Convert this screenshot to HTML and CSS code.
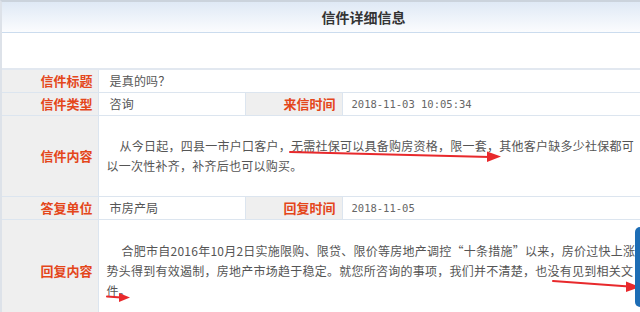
FILE: index.html
```html
<!DOCTYPE html>
<html lang="zh-CN">
<head>
    <meta charset="UTF-8">
    <meta name="viewport" content="width=device-width, initial-scale=1.0">
    <title>信件详细信息</title>
    <link rel="stylesheet" href="styles.css">
</head>
<body>

<div class="page">
    <table class="detail">
        <colgroup>
            <col class="col-label">
            <col class="col-value">
            <col class="col-label2">
            <col>
        </colgroup>
        <tr class="head">
            <th colspan="4">信件详细信息</th>
        </tr>
        <tr class="blank">
            <td colspan="4"></td>
        </tr>
        <tr class="row">
            <th class="label">信件标题</th>
            <td class="value" colspan="3">是真的吗？</td>
        </tr>
        <tr class="row">
            <th class="label">信件类型</th>
            <td class="value">咨询</td>
            <th class="label">来信时间</th>
            <td class="value date">2018-11-03 10:05:34</td>
        </tr>
        <tr class="row tall">
            <th class="label">信件内容</th>
            <td class="content" colspan="3">
                <p class="text">从今日起，四县一市户口客户，无需社保可以具备购房资格，限一套，其他客户缺多少社保都可以一次性补齐，补齐后也可以购买。</p>
            </td>
        </tr>
        <tr class="row">
            <th class="label">答复单位</th>
            <td class="value">市房产局</td>
            <th class="label">回复时间</th>
            <td class="value date">2018-11-05</td>
        </tr>
        <tr class="row tall">
            <th class="label">回复内容</th>
            <td class="content" colspan="3">
                <p class="text reply">合肥市自2016年10月2日实施限购、限贷、限价等房地产调控“十条措施”以来，房价过快上涨势头得到有效遏制，房地产市场趋于稳定。就您所咨询的事项，我们并不清楚，也没有见到相关文件。</p>
            </td>
        </tr>
    </table>

    <!-- red marks drawn on the screenshot -->
    <svg class="marks" width="640" height="312" viewBox="0 0 640 312">
        <g stroke="#e8292c" stroke-width="2" fill="none" stroke-linecap="round">
            <line x1="290" y1="152" x2="490" y2="157"/>
            <line x1="107" y1="296.5" x2="121" y2="297.5"/>
            <line x1="553" y1="281" x2="629" y2="286.5"/>
        </g>
        <g fill="#e8292c">
            <polygon points="487,151.5 501,156.5 487,162"/>
            <polygon points="119,293 130,297.5 119,302"/>
            <polygon points="626,281.5 640,287 626,292"/>
        </g>
    </svg>

    <div class="side-tab"></div>
</div>

</body>
</html>
```

FILE: styles.css
```css
html, body {
    margin: 0;
    padding: 0;
    overflow: hidden;
    background-color: #fff;
}

body {
    font-family: "Noto Sans CJK SC", "Liberation Sans", sans-serif;
    font-size: 12px;
    color: #555;
}

.page {
    position: relative;
    width: 724px;
    border-top: 2px solid #cbd3dc;
    border-left: 2px solid #dde2e9;
}

.detail {
    width: 100%;
    border-collapse: collapse;
    table-layout: fixed;
}

.col-label {
    width: 96px;
}

.col-value {
    width: 147px;
}

.col-label2 {
    width: 97px;
}

.detail th,
.detail td {
    padding: 0;
    border: 1px solid #dce5ef;
}

.detail .head th {
    height: 30px;
    border-top: none;
    border-left: none;
    border-bottom-color: #cbdcee;
    background: linear-gradient(#dfe9f5, #fbfcfe);
    font-size: 14px;
    font-weight: bold;
    color: #333;
    text-align: center;
}

.detail .blank td {
    height: 35px;
    border-left: none;
    border-bottom: 2px solid #e2e8f0;
}

.row {
    height: 23px;
}

.detail .label {
    padding-right: 5px;
    background-color: #efefef;
    color: #e4461a;
    font-size: 13px;
    font-weight: bold;
    text-align: right;
    white-space: nowrap;
}

.detail .label:first-child {
    border-left: none;
}

.detail .value + .label {
    padding-right: 6px;
}

.detail .value {
    padding-left: 11px;
    text-align: left;
    letter-spacing: 0.2px;
}

.detail .date {
    padding-left: 9px;
    font-family: "DejaVu Sans Mono", monospace;
    font-size: 10.5px;
    letter-spacing: 0;
    color: #666;
}

.detail .content {
    padding-left: 8px;
    vertical-align: top;
}

.text {
    width: 535px;
    margin: 20px 0;
    line-height: 20px;
    text-indent: 13px;
    letter-spacing: 0.25px;
}

.reply {
    margin: 21px 0;
    text-indent: 15px;
}

.marks {
    position: absolute;
    top: -2px;
    left: -2px;
    pointer-events: none;
}

.side-tab {
    position: absolute;
    top: 225px;
    left: 633px;
    width: 12px;
    height: 80px;
    background-color: #1d6db5;
    border-radius: 5px;
}
```
